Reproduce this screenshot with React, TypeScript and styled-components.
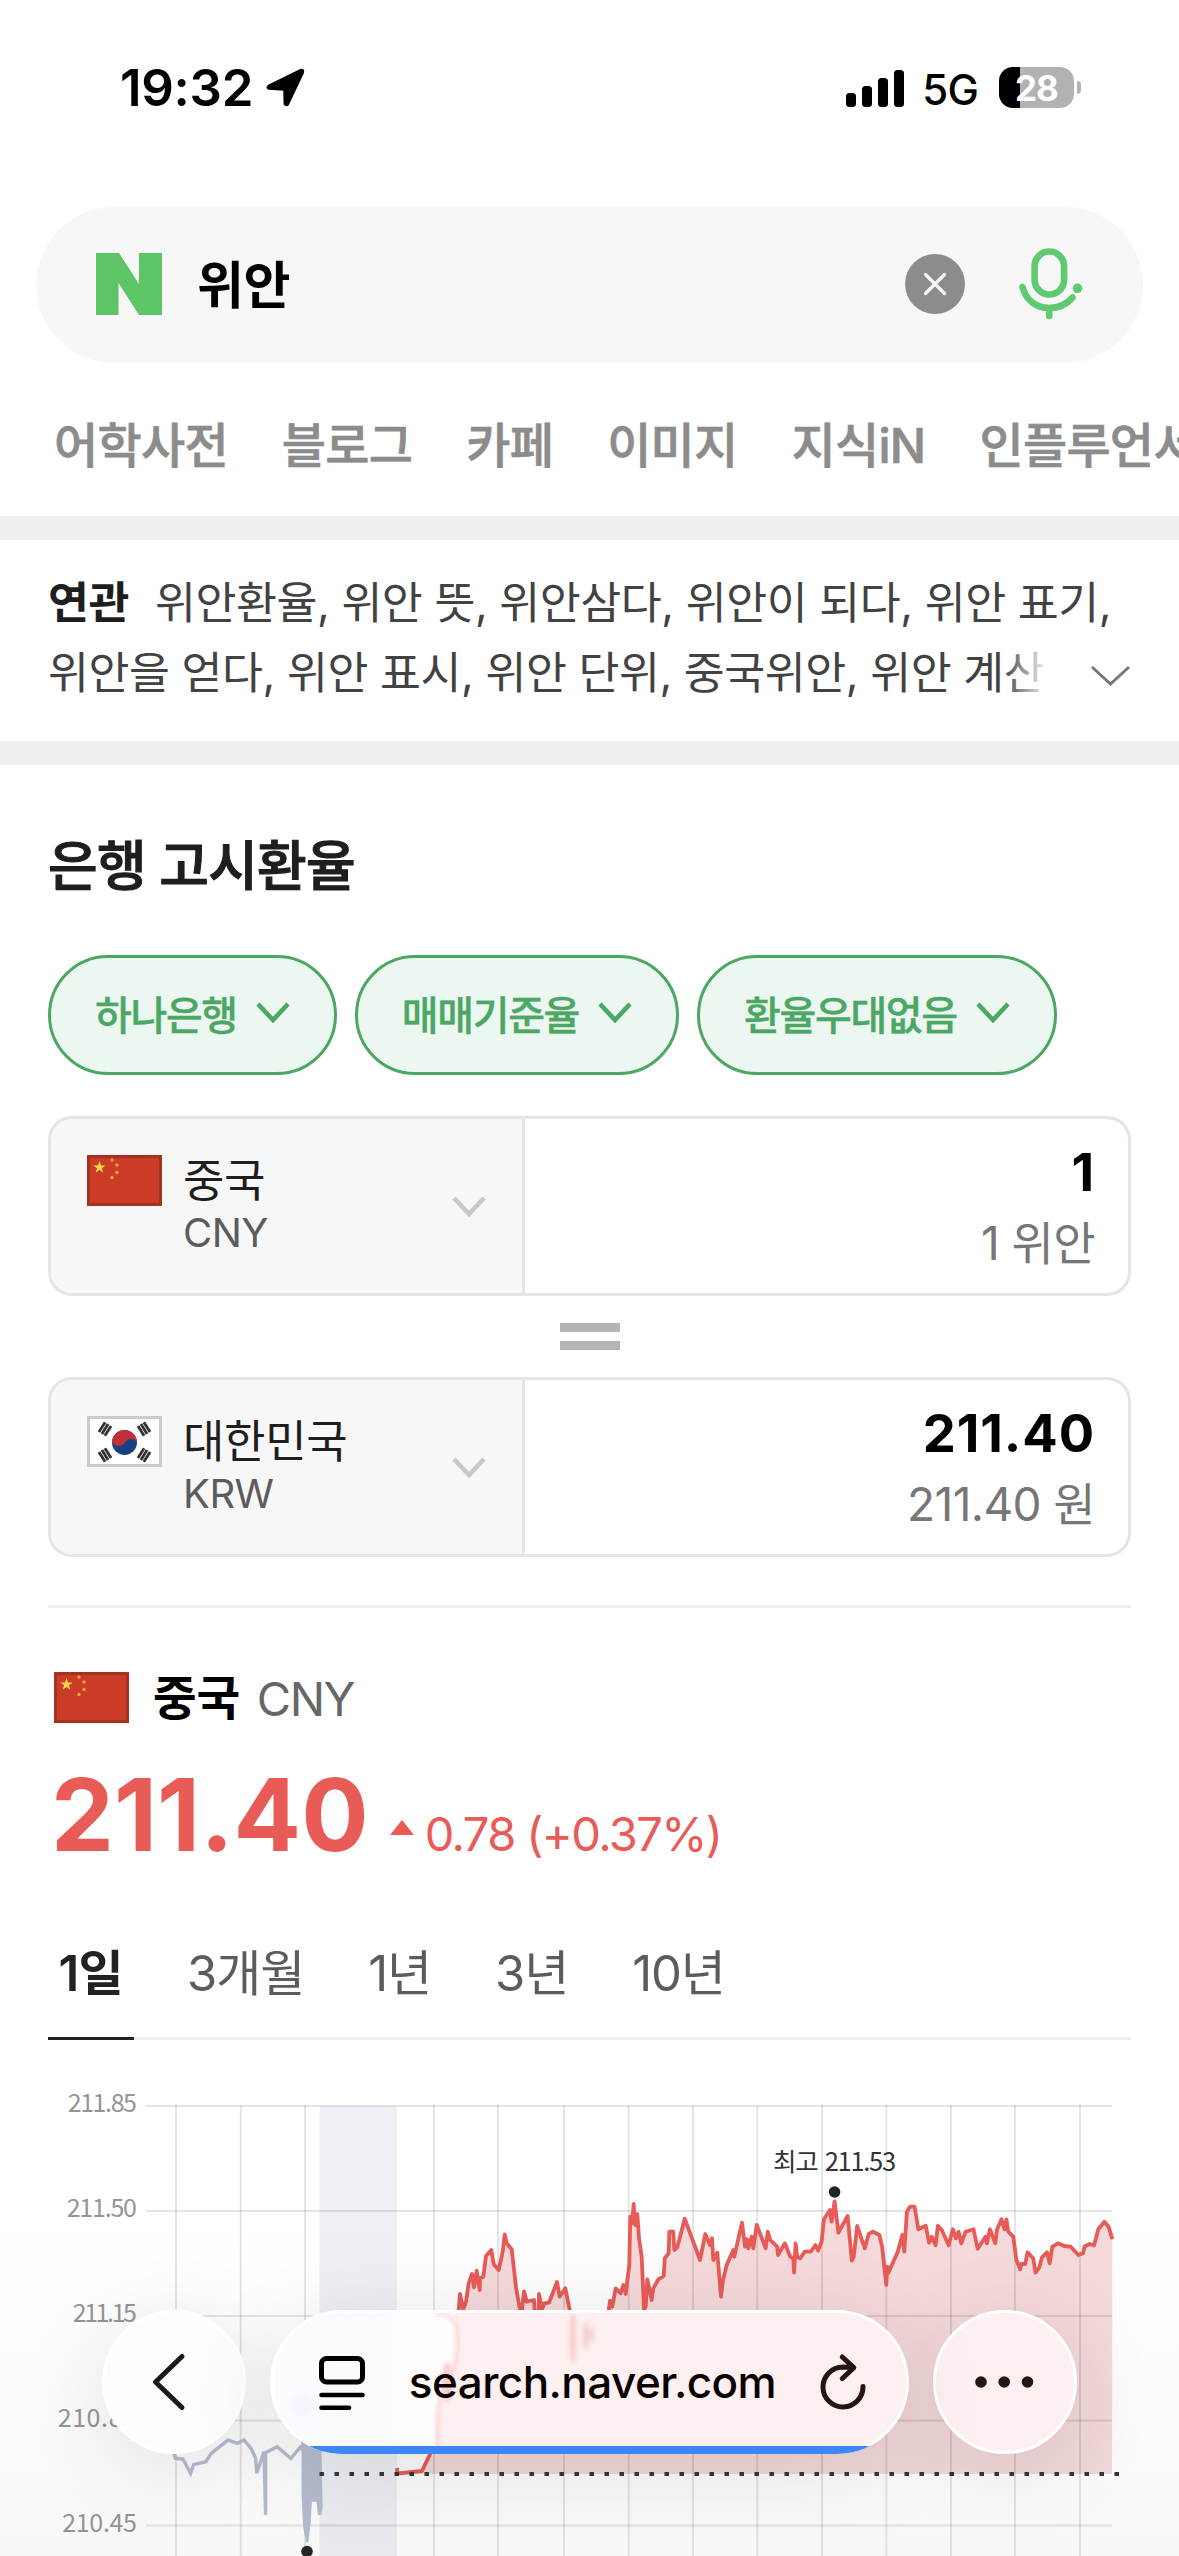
import React from "react";
import styled, { createGlobalStyle } from "styled-components";

const GlobalStyle = createGlobalStyle`
  * { box-sizing: border-box; }
  body {
    margin: 0;
    background: #fff;
    font-family: Inter, "Noto Sans CJK KR", "Liberation Sans", sans-serif;
    -webkit-font-smoothing: antialiased;
  }
`;

const Screen = styled.main`
  position: relative;
  display: flex;
  flex-direction: column;
  width: 1179px;
  height: 2556px;
  overflow: hidden;
  background: #fff;
  white-space: nowrap;
`;

/* ---------- status bar ---------- */

const StatusBar = styled.header`
  display: flex;
  align-items: center;
  justify-content: space-between;
  height: 175px;
  margin-bottom: 32px;
  padding: 0 98px 0 120px;
`;

const StatusGroup = styled.div<{ $gap: number }>`
  display: flex;
  align-items: center;
  gap: ${(p) => p.$gap}px;
`;

const Clock = styled.span`
  font-size: 51px;
  font-weight: 600;
  letter-spacing: -0.3px;
`;

const Network = styled.span`
  margin-left: -3px;
  font-size: 42px;
  font-weight: 450;
  letter-spacing: -0.8px;
  padding-top: 3px;
`;

const Battery = styled.div`
  display: flex;
  align-items: center;
  gap: 3px;
`;

const BatteryBody = styled.div`
  display: flex;
  align-items: center;
  justify-content: center;
  width: 75px;
  height: 41px;
  border-radius: 14px;
  background: linear-gradient(90deg, #000 21px, #b2b2b2 21px);
  color: #fff;
  font-size: 35px;
  font-weight: 700;
  letter-spacing: -1px;
`;

const BatteryTip = styled.div`
  width: 4px;
  height: 13px;
  border-radius: 0 6px 6px 0;
  background: #b2b2b2;
`;

/* ---------- search ---------- */

const SearchBox = styled.div`
  display: flex;
  align-items: center;
  height: 156px;
  margin: 0 36px;
  padding: 0 60px 3px;
  border-radius: 78px;
  background: #f7f7f7;
`;

const Query = styled.span`
  flex: 1;
  margin-left: 35px;
  padding-bottom: 3px;
  font-size: 51px;
  font-weight: 600;
  letter-spacing: -0.3px;
`;

const ClearButton = styled.button`
  display: grid;
  place-items: center;
  width: 60px;
  height: 60px;
  margin-right: 54px;
  padding: 0;
  border: 0;
  border-radius: 50%;
  background: #8c8c8c;
`;

const TabStrip = styled.nav`
  display: flex;
  gap: 54px;
  height: 153px;
  padding: 13px 0 0 54px;
  overflow: hidden;
  color: #8c8c8c;
  font-size: 48px;
  font-weight: 500;
  line-height: 140px;
  letter-spacing: -0.7px;
  -webkit-text-stroke: 0.7px #8c8c8c;
`;

const Divider = styled.div`
  flex: none;
  height: 24px;
  background: #efefef;
`;

/* ---------- related keywords ---------- */

const Related = styled.section`
  position: relative;
  height: 201px;
  padding: 28px 48px 0;
  color: #424242;
  font-size: 44.5px;
  line-height: 70px;
  letter-spacing: -0.45px;
`;

const RelatedLine = styled.div``;

const RelatedLabel = styled.b`
  margin-right: 26px;
  color: #1e1e1e;
  font-weight: 700;
`;

const RelatedMore = styled.div`
  position: absolute;
  right: 0;
  top: 98px;
  display: flex;
  align-items: center;
  justify-content: flex-end;
  width: 175px;
  height: 76px;
  padding-right: 48px;
  background: linear-gradient(90deg, rgba(255, 255, 255, 0), #fff 44px);
`;

/* ---------- exchange ---------- */

const Exchange = styled.section`
  display: flex;
  flex-direction: column;
  padding: 72px 48px 0;
`;

const Title = styled.h2`
  margin: 0;
  color: #1e1e1e;
  font-size: 54px;
  font-weight: 500;
  line-height: 60px;
  letter-spacing: -0.8px;
  -webkit-text-stroke: 1.1px #1e1e1e;
`;

const Filters = styled.div`
  display: flex;
  gap: 18px;
  margin-top: 58px;
`;

const Filter = styled.button`
  display: flex;
  align-items: center;
  gap: 19px;
  height: 120px;
  padding: 0 44px 5px 44px;
  border: 3px solid #4ca764;
  border-radius: 60px;
  background: #edf7f1;
  color: #4ca764;
  font: 500 40px Inter, "Noto Sans CJK KR", sans-serif;
  letter-spacing: -1.35px;
  -webkit-text-stroke: 0.4px #4ca764;
`;

const Card = styled.div<{ $top?: number }>`
  display: flex;
  height: 180px;
  margin-top: ${(p) => p.$top ?? 0}px;
  border: 3px solid #e5e5e5;
  border-radius: 24px;
  overflow: hidden;
`;

const CurrencyCell = styled.div`
  display: flex;
  width: 474px;
  padding: 36px 36px 0 36px;
  border-right: 3px solid #e5e5e5;
  background: #f7f7f7;
`;

const CurrencyNames = styled.div`
  flex: 1;
  margin-left: 21px;
  line-height: 52px;
`;

const CurrencyName = styled.div`
  color: #1e1e1e;
  font-size: 45px;
  letter-spacing: -0.3px;
`;

const CurrencyCode = styled.div`
  color: #5c5c5c;
  font-size: 40px;
  letter-spacing: -0.5px;
`;

const CellChevron = styled.div`
  padding-top: 41px;
`;

const AmountCell = styled.div`
  flex: 1;
  display: flex;
  flex-direction: column;
  align-items: flex-end;
  gap: 11px;
  padding: 23px 33px 0 0;
  line-height: 60px;
`;

const Amount = styled.div`
  font-size: 52.5px;
  font-weight: 700;
  letter-spacing: 0.9px;
`;

const AmountUnit = styled.div`
  color: #767676;
  font-size: 46px;
  letter-spacing: -0.6px;
`;

const Equals = styled.div`
  display: flex;
  flex-direction: column;
  align-items: center;
  justify-content: center;
  gap: 9px;
  height: 81px;
`;

const EqualsBar = styled.i`
  width: 60px;
  height: 9px;
  background: #b4b4b7;
`;

const Rule = styled.hr`
  width: 100%;
  height: 3px;
  margin: 48px 0 0;
  border: 0;
  background: #efefef;
`;

const QuoteHead = styled.div`
  display: flex;
  align-items: center;
  height: 60px;
  margin: 59px 0 0 6px;
`;

const QuoteName = styled.b`
  margin: 0 17px 0 24px;
  padding-bottom: 5px;
  font-size: 47.5px;
  font-weight: 700;
  letter-spacing: -0.3px;
`;

const QuoteCode = styled.span`
  padding-top: 2px;
  color: #666;
  font-size: 47px;
  letter-spacing: -1.5px;
`;

const QuoteRow = styled.div`
  display: flex;
  align-items: baseline;
  height: 100px;
  margin: 38px 0 0 3px;
  color: #e85b57;
  line-height: 100px;
`;

const Price = styled.strong`
  font-size: 100px;
  font-weight: 700;
`;

const UpArrow = styled.i`
  align-self: flex-start;
  margin: 55px 11px 0 21px;
  border: 12px solid transparent;
  border-top: 0;
  border-bottom: 15px solid #e85b57;
`;

const Delta = styled.span`
  font-size: 47px;
  letter-spacing: -1.6px;
`;

const Periods = styled.nav`
  display: flex;
  gap: 42.5px;
  margin-top: 46px;
  box-shadow: inset 0 -3px #efefef;
`;

const Period = styled.a<{ $active?: boolean }>`
  padding: 0 11px 0 10.5px;
  border-bottom: 3px solid ${(p) => (p.$active ? "#222" : "transparent")};
  color: ${(p) => (p.$active ? "#222" : "#5c5c5c")};
  font-size: 49px;
  font-weight: ${(p) => (p.$active ? 600 : 400)};
  line-height: 126px;
  letter-spacing: ${(p) => (p.$active ? "-0.6px" : "-1.1px")};
`;

const Chart = styled.svg`
  display: block;
  flex: none;
  width: 1179px;
  height: 516px;
  margin-left: -48px;
`;

/* ---------- browser toolbar ---------- */

const BottomHaze = styled.div`
  position: absolute;
  inset: auto 0 0;
  height: 340px;
  background: linear-gradient(rgba(120, 120, 120, 0), rgba(120, 120, 120, 0.05));
`;

const Toolbar = styled.div`
  position: absolute;
  left: 102px;
  right: 102px;
  bottom: 102px;
  display: flex;
  gap: 24px;
  height: 144px;
`;

const RoundButton = styled.button<{ $bg: string }>`
  display: grid;
  place-items: center;
  flex: none;
  width: 144px;
  height: 144px;
  padding: 0;
  border: 3px solid #fff;
  border-radius: 50%;
  background: ${(p) => p.$bg};
  box-shadow: 0 16px 90px rgba(0, 0, 0, 0.1);
`;

const AddressBar = styled.div`
  position: relative;
  display: flex;
  align-items: center;
  flex: 1;
  padding: 0 43px 0 49px;
  border-radius: 72px;
  background: #fdf0f0;
  box-shadow: 0 16px 90px rgba(0, 0, 0, 0.1);
  overflow: hidden;
`;

const GlassLayer = styled.svg`
  position: absolute;
  inset: 0;
`;

const AddressIcon = styled.svg`
  position: relative;
  flex: none;
`;

const Url = styled.span`
  position: relative;
  flex: 1;
  text-align: center;
  color: #0a0202;
  font-size: 44px;
  font-weight: 500;
  line-height: 60px;
  letter-spacing: -0.55px;
`;

const chevron = (w: number, h: number, color: string, stroke: number) => (
  <svg width={w} height={h} viewBox={`0 0 ${w} ${h}`} fill="none" stroke={color} strokeWidth={stroke}>
    <path d={`M2 2 L${w / 2} ${h - 3} L${w - 2} 2`} />
  </svg>
);

function starPoints(cx: number, cy: number, r: number) {
  return Array.from({ length: 10 }, (_, i) => {
    const a = (Math.PI / 5) * i - Math.PI / 2;
    const d = i % 2 ? r * 0.4 : r;
    return `${cx + d * Math.cos(a)},${cy + d * Math.sin(a)}`;
  }).join(" ");
}

const ChinaFlag = () => (
  <svg width="75" height="51" viewBox="0 0 75 51">
    <rect width="75" height="51" fill="#a33320" />
    <rect x="3" y="3" width="69" height="45" fill="#cc3b25" />
    <polygon points={starPoints(12.5, 12.5, 6.5)} fill="#f9d549" />
    {[[25, 5], [30, 10], [30, 17.5], [25, 22.5]].map(([x, y]) => (
      <circle key={`${x}-${y}`} cx={x} cy={y} r="1.7" fill="#eda53a" />
    ))}
  </svg>
);

const KoreaFlag = () => (
  <svg width="75" height="51" viewBox="0 0 75 51">
    <rect width="75" height="51" fill="#cbcbcb" />
    <rect x="3" y="3" width="69" height="45" fill="#fff" />
    <circle cx="37.5" cy="26.5" r="12.5" fill="#1a3f80" />
    <path d="M25 26.5 A12.5 12.5 0 0 1 50 26.5 C49 22 41 21.5 38 26.5 C35 31 27 30.5 25 26.5Z" fill="#c03035" />
    {[[18, 13, -58], [57, 13, 58], [18, 39, 58], [57, 39, -58]].map(([x, y, r]) => (
      <g key={`${x}-${y}`} transform={`translate(${x} ${y}) rotate(${r})`} fill="#333">
        <rect x="-5.8" y="-4.9" width="11.6" height="2.8" />
        <rect x="-5.8" y="-1.4" width="11.6" height="2.8" />
        <rect x="-5.8" y="2.1" width="11.6" height="2.8" />
      </g>
    ))}
  </svg>
);

/* ---------- chart data ---------- */

type Pt = [number, number];
const place = (pts: Pt[], ox: number, oy: number, sx: number): Pt[] =>
  pts.map(([x, y]) => [ox + x / sx, oy + y / 3]);
const join = (pts: Pt[]) => pts.map(([x, y]) => `${x.toFixed(1)},${y.toFixed(1)}`).join(" ");

const opening: Pt[] = [[397, 2468], [397.5, 2473.5], [422, 2471], [432, 2450], [436, 2400], [446, 2350], [454, 2325]];
const morning = place([
  [236, 480], [240, 432], [250, 478], [258, 455], [266, 400], [276, 372], [282, 412], [290, 362], [299, 420],
  [300, 385], [310, 380], [318, 318], [334, 300], [341, 343], [356, 360], [368, 305], [374, 253], [380, 280],
  [395, 298], [408, 412], [420, 480], [426, 480], [432, 424], [440, 455], [462, 450], [464, 484], [476, 484],
  [477, 432], [486, 478], [493, 460], [507, 458], [531, 396], [539, 440], [556, 415], [570, 484], [590, 560],
  [670, 560], [686, 482], [690, 452], [697, 470], [707, 415], [722, 430], [730, 405], [737, 432], [741, 400],
  [748, 345], [751, 200], [756, 220], [761, 162], [765, 225], [772, 192], [777, 265], [785, 320], [792, 480],
  [797, 470], [802, 388], [815, 450], [820, 415], [835, 388], [851, 378], [854, 325], [866, 310], [868, 245],
  [880, 245], [883, 300], [892, 292], [914, 206], [960, 330], [976, 252], [990, 285], [996, 265], [1000, 330],
  [1012, 308], [1023, 440], [1028, 395], [1040, 345], [1060, 300], [1063, 320], [1086, 218], [1095, 290],
  [1101, 268], [1105, 295], [1115, 260], [1120, 295], [1130, 225], [1157, 295],
], 380, 2150, 3);
const afternoon = place([
  [493, 515], [500, 540], [518, 560], [520, 585], [538, 550], [552, 590], [560, 595], [562, 638], [566, 550],
  [570, 590], [578, 595], [590, 575], [606, 575], [618, 555], [625, 572], [634, 545], [640, 478], [656, 450],
  [660, 485], [668, 424], [678, 518], [702, 468], [708, 540], [713, 602], [718, 590], [727, 498], [747, 565],
  [757, 522], [768, 515], [785, 525], [792, 560], [803, 675], [806, 620], [808, 640], [833, 575], [845, 525],
  [850, 575], [857, 455], [865, 440], [877, 440], [887, 508], [906, 497], [915, 548], [922, 530], [932, 556],
  [938, 497], [948, 510], [966, 556], [977, 508], [985, 535], [992, 515], [999, 550], [1010, 515], [1031, 508],
  [1042, 566], [1062, 530], [1066, 550], [1074, 508], [1088, 550], [1092, 510], [1104, 478], [1112, 508],
  [1117, 478], [1122, 515], [1135, 530], [1143, 600], [1153, 628], [1156, 612], [1166, 612], [1172, 577],
  [1187, 595], [1193, 638], [1203, 622], [1210, 592], [1223, 577], [1230, 610], [1237, 560], [1252, 550],
  [1268, 558], [1285, 560], [1305, 585], [1317, 580], [1321, 560], [1334, 552], [1346, 556], [1357, 508],
  [1373, 485], [1384, 500], [1394, 538],
], 579, 2060, 2.6133);
const today = [...opening, ...morning, ...afternoon];

const previous = place([
  [450, 1160], [458, 1195], [478, 1197], [498, 1240], [506, 1214], [538, 1205], [552, 1180], [596, 1140],
  [620, 1150], [638, 1140], [656, 1165], [668, 1195], [671, 1240], [690, 1175], [694, 1365], [694, 1178],
  [724, 1160], [760, 1195], [786, 1160], [795, 1175],
], 0, 2060, 2.6133);
const previousClose = place([
  [788, 1130], [840, 1150], [843, 1340], [840, 1365], [831, 1365], [827, 1325], [815, 1325], [812, 1385],
  [806, 1447], [800, 1447], [792, 1400], [788, 1300],
], 0, 2060, 2.6133);

const gridX = [176, 240.7, 305, 434, 498, 564, 628.7, 693, 757.3, 822, 886.3, 951, 1015, 1080];
/* y position, label, tracking of the label */
const gridY: [number, string, number][] = [
  [2106, "211.85", -1.4], [2211, "211.50", -1.2], [2316, "211.15", -2.4], [2420.5, "210.80", 0.6], [2525.5, "210.45", -0.3],
];

const RateChart = () => (
  <Chart viewBox="0 2040 1179 516">
    <rect x="319.5" y="2106" width="77.5" height="450" fill="#eff0f5" />
    <polygon points={join([...today, [1112, 2474], [397, 2474]])} fill="#d0454a" fillOpacity="0.2" />
    <g stroke="#000" strokeOpacity="0.1" strokeWidth="2">
      {gridX.map((x) => <line key={x} x1={x} x2={x} y1="2105" y2="2556" />)}
      {gridY.map(([y]) => <line key={y} x1="146" x2="1112" y1={y} y2={y} />)}
    </g>
    <g fill="#959595" fontFamily='"Noto Sans CJK KR", sans-serif' fontSize="25" textAnchor="end">
      {gridY.map(([y, label, tracking]) => (
        <text key={label} x={137 + tracking} y={y + 6} letterSpacing={tracking}>{label}</text>
      ))}
    </g>
    <polyline points={join(today)} fill="none" stroke="#e85b57" strokeWidth="3.8" strokeLinejoin="round" />
    <polyline points={join(previous)} fill="none" stroke="#b5bdd0" strokeWidth="3.4" />
    <polygon points={join(previousClose)} fill="#b5bdd0" />
    <line x1="319.5" x2="1119" y1="2474" y2="2474" stroke="#333" strokeWidth="4" strokeDasharray="4.5 10.5" />
    <circle cx="834.6" cy="2192" r="5.8" fill="#222" />
    <circle cx="307" cy="2551.5" r="5.8" fill="#222" />
    <text x="773" y="2171" fill="#333" fontFamily='"Noto Sans CJK KR", sans-serif' fontSize="25.5" letterSpacing="-1.3" wordSpacing="3">
      최고 211.53
    </text>
  </Chart>
);

const tabs = ["어학사전", "블로그", "카페", "이미지", "지식iN", "인플루언서"];
const filters = ["하나은행", "매매기준율", "환율우대없음"];
const periods = ["1일", "3개월", "1년", "3년", "10년"];
const currencies = [
  { name: "중국", code: "CNY", amount: "1", unit: "1 위안", flag: <ChinaFlag /> },
  { name: "대한민국", code: "KRW", amount: "211.40", unit: "211.40 원", flag: <KoreaFlag /> },
];

export default function App() {
  return (
    <Screen>
      <GlobalStyle />
      <StatusBar>
        <StatusGroup $gap={13}>
          <Clock>19:32</Clock>
          <svg width="39" height="39" viewBox="0 0 39 39">
            <path d="M2.5 17.5 L34 1.8 Q38.5 0.5 37.2 5 L22.5 36 Q20.5 39 18.3 36 L18 22 L3 21 Q-0.5 20 2.5 17.5Z" stroke="#000" strokeWidth="1.5" strokeLinejoin="round" />
          </svg>
        </StatusGroup>
        <StatusGroup $gap={21}>
          <svg width="58" height="38" viewBox="0 0 58 38">
            <rect x="0" y="24" width="10" height="14" rx="3.5" />
            <rect x="16" y="17" width="10" height="21" rx="3.5" />
            <rect x="32" y="9" width="10" height="29" rx="3.5" />
            <rect x="48" y="1" width="10" height="37" rx="3.5" />
          </svg>
          <Network>5G</Network>
          <Battery>
            <BatteryBody>28</BatteryBody>
            <BatteryTip />
          </Battery>
        </StatusGroup>
      </StatusBar>

      <SearchBox>
        <svg width="66" height="62" viewBox="0 0 66 62">
          <path d="M0 0H23L43 31V0H66V62H43L22.5 30V62H0Z" fill="#5dc566" />
        </svg>
        <Query>위안</Query>
        <ClearButton>
          <svg width="24" height="24" viewBox="0 0 24 24" stroke="#f7f7f7" strokeWidth="3.2" strokeLinecap="round">
            <path d="M2.5 2.5 L21.5 21.5 M21.5 2.5 L2.5 21.5" />
          </svg>
        </ClearButton>
        <svg width="64" height="72" viewBox="0 0 64 72" fill="none" stroke="#5fca70" strokeWidth="6.6" strokeLinecap="round">
          <rect x="15.6" y="3.5" width="29.5" height="43" rx="14.7" />
          <path d="M3.5 39 C7 53 18 60 30.5 60 C40 60 48 56 53.5 49.5 M30.3 60 V68" />
          <circle cx="58.5" cy="40.3" r="4.8" fill="#5fca70" stroke="none" />
        </svg>
      </SearchBox>

      <TabStrip>{tabs.map((t) => <span key={t}>{t}</span>)}</TabStrip>
      <Divider />

      <Related>
        <RelatedLine>
          <RelatedLabel>연관</RelatedLabel>위안환율, 위안 뜻, 위안삼다, 위안이 되다, 위안 표기,
        </RelatedLine>
        <RelatedLine>위안을 얻다, 위안 표시, 위안 단위, 중국위안, 위안 계산</RelatedLine>
        <RelatedMore>{chevron(41, 22, "#777", 3)}</RelatedMore>
      </Related>
      <Divider />

      <Exchange>
        <Title>은행 고시환율</Title>
        <Filters>
          {filters.map((f) => (
            <Filter key={f}>
              {f}
              {chevron(34, 21, "#4ca764", 4.6)}
            </Filter>
          ))}
        </Filters>
        {currencies.map((c, i) => (
          <React.Fragment key={c.code}>
            {i > 0 && <Equals><EqualsBar /><EqualsBar /></Equals>}
            <Card $top={i === 0 ? 41 : 0}>
              <CurrencyCell>
                {c.flag}
                <CurrencyNames>
                  <CurrencyName>{c.name}</CurrencyName>
                  <CurrencyCode>{c.code}</CurrencyCode>
                </CurrencyNames>
                <CellChevron>{chevron(34, 21, "#c8c8c8", 4.6)}</CellChevron>
              </CurrencyCell>
              <AmountCell>
                <Amount>{c.amount}</Amount>
                <AmountUnit>{c.unit}</AmountUnit>
              </AmountCell>
            </Card>
          </React.Fragment>
        ))}
        <Rule />
        <QuoteHead>
          <ChinaFlag />
          <QuoteName>중국</QuoteName>
          <QuoteCode>CNY</QuoteCode>
        </QuoteHead>
        <QuoteRow>
          <Price>211.40</Price>
          <UpArrow />
          <Delta>0.78 (+0.37%)</Delta>
        </QuoteRow>
        <Periods>
          {periods.map((p, i) => <Period key={p} $active={i === 0}>{p}</Period>)}
        </Periods>
        <RateChart />
      </Exchange>

      <BottomHaze />
      <Toolbar>
        <RoundButton $bg="#fdfdfd">
          <svg width="60" height="60" viewBox="0 0 60 60" fill="none" stroke="#1a1a1a" strokeWidth="5" strokeLinecap="round" strokeLinejoin="round">
            <path d="M38 4.5 L11.5 30 L38 55.5" />
          </svg>
        </RoundButton>
        <AddressBar>
          <GlassLayer width="639" height="144" viewBox="0 0 639 144">
            <defs>
              <linearGradient id="glass" x1="0" x2="1" y1="0" y2="0">
                <stop offset="0" stopColor="#fbfcff" />
                <stop offset="0.6" stopColor="#f9fbff" />
                <stop offset="0.72" stopColor="#fefefe" />
                <stop offset="1" stopColor="#fefefe" />
              </linearGradient>
              <filter id="soft" x="-50%" y="-50%" width="200%" height="200%">
                <feGaussianBlur stdDeviation="2" />
              </filter>
            </defs>
            <path d="M0 0H182Q188 12 187 45Q181 70 171 90Q165 110 166 144H0Z" fill="url(#glass)" />
            <ellipse cx="33" cy="96" rx="11" ry="11" fill="#f4f6ff" filter="url(#soft)" />
            <path d="M165 4 Q186 2 187 22 Q188 50 181 65 Q171 85 168 100 L167 142" fill="none" stroke="#f9d2d2" strokeWidth="3.5" filter="url(#soft)" />
            <g fill="#f8cccc" filter="url(#soft)">
              <ellipse cx="177" cy="72" rx="5" ry="20" />
              <ellipse cx="303" cy="28" rx="3.5" ry="26" />
              <ellipse cx="316" cy="26" rx="3" ry="15" />
              <ellipse cx="322" cy="25" rx="2" ry="8" />
            </g>
            <rect x="1.5" y="1.5" width="636" height="141" rx="70.5" fill="none" stroke="#fff" strokeWidth="3" />
            <rect y="136" width="639" height="8" fill="#3d87f5" />
          </GlassLayer>
          <AddressIcon width="46" height="58" viewBox="0 0 46 58" fill="none" stroke="#000" strokeWidth="5" strokeLinecap="round">
            <rect x="2.5" y="5.5" width="41" height="23.5" rx="5" />
            <path d="M2.5 42H43.5 M2.5 54.7H30" strokeWidth="4.6" />
          </AddressIcon>
          <Url>search.naver.com</Url>
          <AddressIcon width="46" height="60" viewBox="820 2350 46 60" fill="none" stroke="#271214" strokeWidth="5" strokeLinecap="round" strokeLinejoin="round">
            <path d="M863 2384.5 A20 20 0 1 1 843 2365 L853 2365.7 M842.3 2355 L853.8 2365.7 L842.3 2376.5" />
          </AddressIcon>
        </AddressBar>
        <RoundButton $bg="#fdf0f0">
          <svg width="60" height="12" viewBox="0 0 60 12" fill="#271214">
            <circle cx="6" cy="6" r="5.8" />
            <circle cx="29.2" cy="6" r="5.8" />
            <circle cx="52.5" cy="6" r="5.8" />
          </svg>
        </RoundButton>
      </Toolbar>
    </Screen>
  );
}
